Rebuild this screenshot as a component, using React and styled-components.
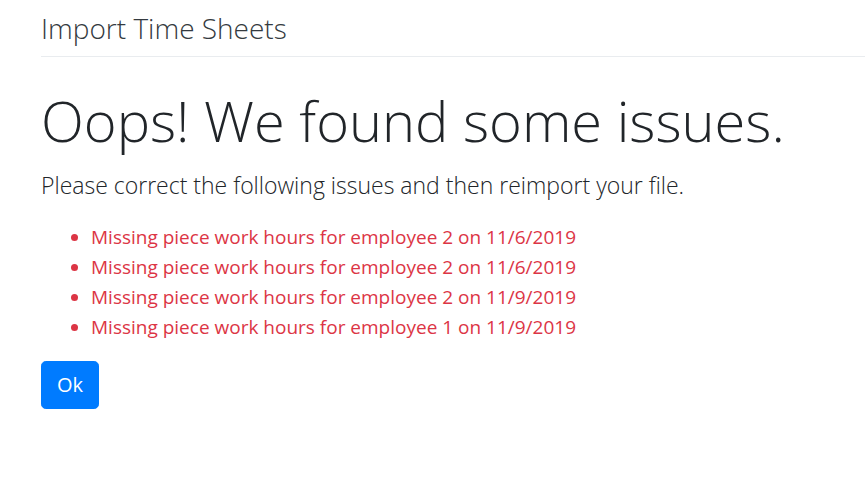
import styled, { createGlobalStyle } from 'styled-components';

const GlobalStyle = createGlobalStyle`
    body {
        margin: 0;
        background: #fff;
        font-family: "Open Sans", "Noto Sans", sans-serif;
        color: #212529;
    }
`;

const Page = styled.main`
    padding: 0 0 0 41px;
`;

const Header = styled.header`
    padding-top: 12px;
    padding-bottom: 10px;
    border-bottom: 1px solid #e9ecef;
`;

const HeaderTitle = styled.h3`
    margin: 0;
    font-size: 28px;
    font-weight: 300;
    line-height: 1.2;
    color: #343a40;
`;

const Title = styled.h1`
    margin: 30px 0 0;
    font-size: 56px;
    font-weight: 300;
    line-height: 1.2;
`;

const Lead = styled.p`
    margin: 14px 0 20px;
    font-size: 23px;
    font-weight: 300;
    line-height: 1.5;
`;

const IssueList = styled.ul`
    margin: 0 0 19px;
    padding-left: 50px;
    color: #dc3545;
    font-size: 19px;
    line-height: 30px;
`;

const Issue = styled.li`
    padding-left: 0;
`;

const OkButton = styled.button`
    display: block;
    padding: 8px 15px;
    border: 1px solid #007bff;
    border-radius: 4.8px;
    background: #007bff;
    color: #fff;
    font-family: inherit;
    font-size: 20px;
    line-height: 1.5;
    cursor: pointer;
`;

const issues = [
    'Missing piece work hours for employee 2 on 11/6/2019',
    'Missing piece work hours for employee 2 on 11/6/2019',
    'Missing piece work hours for employee 2 on 11/9/2019',
    'Missing piece work hours for employee 1 on 11/9/2019',
];

const App = () => {
    return (
        <Page>
            <GlobalStyle />
            <Header>
                <HeaderTitle>Import Time Sheets</HeaderTitle>
            </Header>
            <Title>Oops! We found some issues.</Title>
            <Lead>Please correct the following issues and then reimport your file.</Lead>
            <IssueList>
                {issues.map((issue, i) => (
                    <Issue key={i}>{issue}</Issue>
                ))}
            </IssueList>
            <OkButton>Ok</OkButton>
        </Page>
    )
}

export default App;
